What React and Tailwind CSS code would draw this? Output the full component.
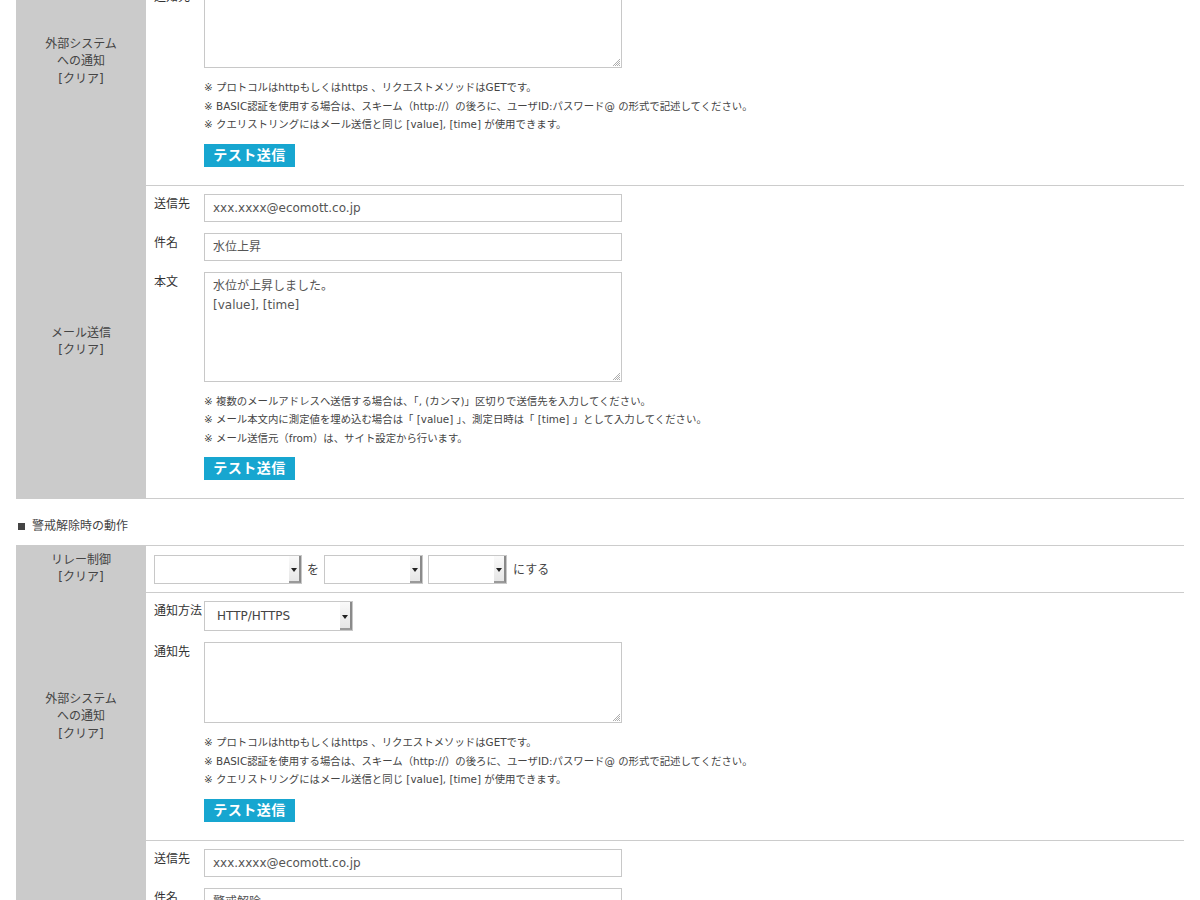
import React from 'react';

const FONT = "font-['DejaVu_Sans','Noto_Sans_CJK_JP',sans-serif]";

const Grip = () => (
  <svg className="absolute right-0 bottom-0" width="10" height="10" viewBox="0 0 10 10">
    <path d="M9 2 L2 9 M9 4 L4 9 M9 6 L6 9 M9 8 L8 9" stroke="#999" strokeWidth="0.8" />
  </svg>
);

const TextBox = ({ h, lines = [] }) => (
  <div
    className="relative w-[418px] border border-[#c8c8c8] bg-white px-[8px] pt-[4px] text-[12px] leading-[19px] text-[#555]"
    style={{ height: h }}
  >
    {lines.map((l, i) => (
      <div key={i}>{l}</div>
    ))}
    <Grip />
  </div>
);

const Input = ({ value }) => (
  <div className="w-[418px] h-[28px] border border-[#c8c8c8] bg-white px-[8px] flex items-center text-[12px] text-[#555]">
    {value}
  </div>
);

const Select = ({ w, h = 30, value = '' }) => (
  <div className="flex border border-[#c8c8c8] bg-white" style={{ width: w, height: h }}>
    <div className="flex-1 flex items-center pl-[12px] text-[12px] text-[#444]">{value}</div>
    <div className="w-[12px] flex items-center justify-center bg-gradient-to-b from-[#fafafa] to-[#e6e6e6] border-r-2 border-b-2 border-r-[#8a8a8a] border-b-[#9a9a9a]">
      <svg width="6" height="4" viewBox="0 0 6 4" className="mt-[3px]">
        <path d="M0 0 L6 0 L3 4 Z" fill="#222" />
      </svg>
    </div>
  </div>
);

const Field = ({ label, children, className = '' }) => (
  <div className={`flex ${className}`}>
    <div className="w-[50px] shrink-0 text-[12px] leading-[16px] pt-[2px] text-[#333]">{label}</div>
    <div>{children}</div>
  </div>
);

const Notes = ({ items }) => (
  <div className="ml-[50px] mt-[10px] text-[10.4px] leading-[18.5px] text-[#444]">
    {items.map((t, i) => (
      <div key={i}>※ {t}</div>
    ))}
  </div>
);

const TestButton = () => (
  <div className="ml-[50px] mt-[10px] w-[91px] h-[23px] bg-[#17a6d0] text-white font-bold text-[14px] flex items-center justify-center tracking-[0.5px]">
    テスト送信
  </div>
);

const Row = ({ label, children, top = false, compact = false }) => (
  <div className="flex">
    <div className="w-[130px] shrink-0 bg-[#cbcbcb] flex flex-col items-center justify-center text-center text-[12px] leading-[17.5px] text-[#444]">
      {label.map((l, i) => (
        <div key={i}>{l}</div>
      ))}
    </div>
    <div
      className={`flex-1 border-b border-[#cccccc] pl-[8px] ${top ? 'border-t' : ''} ${
        compact ? 'pt-[9px] pb-[8px]' : 'pt-[8px] pb-[18px]'
      }`}
    >
      {children}
    </div>
  </div>
);

const httpNotes = [
  'プロトコルはhttpもしくはhttps 、リクエストメソッドはGETです。',
  'BASIC認証を使用する場合は、スキーム（http://）の後ろに、ユーザID:パスワード@ の形式で記述してください。',
  'クエリストリングにはメール送信と同じ [value], [time] が使用できます。',
];

const mailNotes = [
  '複数のメールアドレスへ送信する場合は、「, (カンマ)」区切りで送信先を入力してください。',
  'メール本文内に測定値を埋め込む場合は「 [value] 」、測定日時は「 [time] 」として入力してください。',
  'メール送信元（from）は、サイト設定から行います。',
];

const ExternalRow = () => (
  <Row label={['外部システム', 'への通知', '[クリア]']}>
    <Field label="通知方法">
      <Select w={149} value="HTTP/HTTPS" />
    </Field>
    <Field label="通知先" className="mt-[11px]">
      <TextBox h={81} />
    </Field>
    <Notes items={httpNotes} />
    <TestButton />
  </Row>
);

const MailRow = ({ subject, body }) => (
  <Row label={['メール送信', '[クリア]']}>
    <Field label="送信先">
      <Input value="xxx.xxxx@ecomott.co.jp" />
    </Field>
    <Field label="件名" className="mt-[11px]">
      <Input value={subject} />
    </Field>
    <Field label="本文" className="mt-[11px]">
      <TextBox h={110} lines={body} />
    </Field>
    <Notes items={mailNotes} />
    <TestButton />
  </Row>
);

export default function App() {
  return (
    <div className={`w-[1200px] h-[900px] overflow-hidden bg-white text-[#333] ${FONT}`}>
      <div className="-mt-[62px] px-4">
        <ExternalRow />
        <MailRow subject="水位上昇" body={['水位が上昇しました。', '[value], [time]']} />

        <div className="pt-[19px] pb-[11px] pl-[2px] text-[12px] leading-[16px] text-[#444] flex items-center">
          <span className="inline-block w-[7px] h-[7px] bg-[#444] mr-[7px]" />
          警戒解除時の動作
        </div>

        <Row label={['リレー制御', '[クリア]']} top compact>
          <div className="flex items-center text-[12px] text-[#444]">
            <Select w={148} h={29} />
            <span className="mx-[5px]">を</span>
            <Select w={99} h={29} />
            <div className="w-[5px]" />
            <Select w={79} h={29} />
            <span className="ml-[6px]">にする</span>
          </div>
        </Row>
        <ExternalRow />
        <MailRow subject="警戒解除" body={['水位が下降しました。', '[value], [time]']} />
      </div>
    </div>
  );
}
